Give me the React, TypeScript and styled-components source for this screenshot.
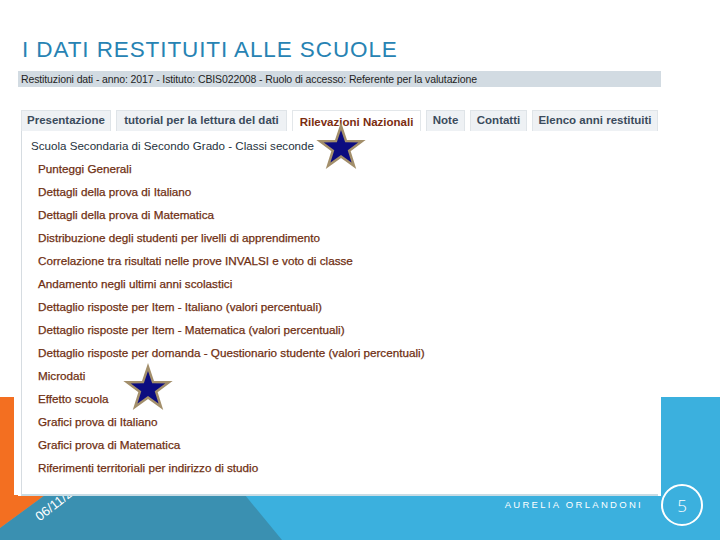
import styled, { createGlobalStyle } from "styled-components";

const GlobalStyle = createGlobalStyle`
  html, body {
    margin: 0;
    padding: 0;
    background: #ffffff;
  }
  body {
    font-family: "Liberation Sans", Arial, sans-serif;
  }
`;

const Slide = styled.div`
  position: relative;
  width: 720px;
  height: 540px;
  overflow: hidden;
  background: #ffffff;
  display: flex;
  flex-direction: column;
`;

const Backdrop = styled.svg`
  position: absolute;
  left: 0;
  top: 0;
  z-index: 0;
`;

const Title = styled.h1`
  position: relative;
  z-index: 1;
  margin: 37px 0 0 22px;
  font: 400 22.5px/26px "Liberation Sans", Arial, sans-serif;
  letter-spacing: 0.9px;
  color: #2783b3;
`;

const DateLabel = styled.div`
  position: absolute;
  left: 41px;
  top: 510px;
  z-index: 1;
  font: 400 13px/13px "Liberation Sans", Arial, sans-serif;
  color: #ffffff;
  transform: rotate(-38deg);
  transform-origin: left bottom;
  white-space: nowrap;
`;

const Shot = styled.div`
  position: relative;
  z-index: 2;
  margin: 8px 0 0 18px;
  width: 643px;
  height: 425px;
  background: #ffffff;
  display: flex;
  flex-direction: column;
`;

const HeaderBar = styled.div`
  height: 16px;
  padding-left: 3px;
  background: #d2dbe2;
  font: 400 10.5px/16px "Liberation Sans", Arial, sans-serif;
  letter-spacing: -0.12px;
  color: #1e1e1e;
  white-space: nowrap;
  overflow: hidden;
`;

const Body = styled.div`
  flex: 1;
  display: flex;
  flex-direction: column;
  padding: 23px 3px 0 3px;
`;

const TabRow = styled.div`
  display: flex;
  gap: 5px;
  height: 21px;
`;

const Tab = styled.div<{ $width: number; $active?: boolean }>`
  box-sizing: border-box;
  width: ${(p) => p.$width}px;
  height: 21px;
  border: 1px solid ${(p) => (p.$active ? "#e3e7ea" : "#dfe4e8")};
  border-bottom: none;
  background: ${(p) => (p.$active ? "#ffffff" : "#eef1f4")};
  padding-top: ${(p) => (p.$active ? "2px" : "0")};
  font: 700 11.5px/19px "Liberation Sans", Arial, sans-serif;
  color: ${(p) => (p.$active ? "#7b2d10" : "#3b4b5c")};
  text-align: center;
  white-space: nowrap;
`;

const TabPanel = styled.div`
  flex: 1;
  border-left: 1px solid #d6dce1;
  border-bottom: 2px solid #c8dce5;
  padding: 3px 0 0 9px;
`;

const SubTitle = styled.div`
  font: 400 11.6px/23px "Liberation Sans", Arial, sans-serif;
  color: #26323d;
`;

const LinkList = styled.ul`
  margin: 0;
  padding: 0 0 0 7px;
  list-style: none;
`;

const LinkItem = styled.li`
  font: 400 11.7px/23px "Liberation Sans", Arial, sans-serif;
  color: #6f2f12;
  -webkit-text-stroke: 0.25px #6f2f12;
  white-space: nowrap;
`;

const StarMark = styled.svg<{ $left: number; $top: number }>`
  position: absolute;
  left: ${(p) => p.$left}px;
  top: ${(p) => p.$top}px;
`;

const Footer = styled.div`
  position: relative;
  z-index: 3;
  display: flex;
  justify-content: flex-end;
  align-items: center;
  gap: 18px;
  height: 42px;
  margin-top: -12px;
  padding-right: 17px;
`;

const Author = styled.div`
  font: 400 9.5px/12px "Liberation Sans", Arial, sans-serif;
  letter-spacing: 2.3px;
  color: #ffffff;
`;

const PageNum = styled.div`
  box-sizing: border-box;
  width: 42px;
  height: 42px;
  border: 2.5px solid #ffffff;
  border-radius: 50%;
  display: flex;
  align-items: center;
  justify-content: center;
  font: 300 17px/1 "Open Sans", "Liberation Sans", sans-serif;
  color: #ffffff;
`;

const tabs = [
  { label: "Presentazione", width: 90 },
  { label: "tutorial per la lettura del dati", width: 171 },
  { label: "Rilevazioni Nazionali", width: 129, active: true },
  { label: "Note", width: 39 },
  { label: "Contatti", width: 57 },
  { label: "Elenco anni restituiti", width: 126 },
];

const links = [
  "Punteggi Generali",
  "Dettagli della prova di Italiano",
  "Dettagli della prova di Matematica",
  "Distribuzione degli studenti per livelli di apprendimento",
  "Correlazione tra risultati nelle prove INVALSI e voto di classe",
  "Andamento negli ultimi anni scolastici",
  "Dettaglio risposte per Item - Italiano (valori percentuali)",
  "Dettaglio risposte per Item - Matematica (valori percentuali)",
  "Dettaglio risposte per domanda - Questionario studente (valori percentuali)",
  "Microdati",
  "Effetto scuola",
  "Grafici prova di Italiano",
  "Grafici prova di Matematica",
  "Riferimenti territoriali per indirizzo di studio",
];

const starPoints = (c: number, outer: number, inner: number) =>
  Array.from({ length: 10 }, (_, i) => {
    const r = i % 2 === 0 ? outer : inner;
    const a = ((-90 + i * 36) * Math.PI) / 180;
    return `${(c + r * Math.cos(a)).toFixed(2)},${(c + r * Math.sin(a)).toFixed(2)}`;
  }).join(" ");

const Star = ({ left, top }: { left: number; top: number }) => (
  <StarMark $left={left} $top={top} width="56" height="56" viewBox="0 0 56 56">
    <polygon
      points={starPoints(28, 22, 8.6)}
      fill="#0c0c80"
      stroke="#a38f6b"
      strokeWidth="2.5"
    />
  </StarMark>
);

const App = () => (
  <Slide>
    <GlobalStyle />
    <Backdrop width="720" height="540" viewBox="0 0 720 540">
      <rect x="0" y="495" width="720" height="45" fill="#3bb0de" />
      <rect x="661" y="397" width="59" height="143" fill="#3bb0de" />
      <polygon points="0,528 45,495 245,495 282,540 0,540" fill="#3a90b1" />
      <polygon points="0,397 14,397 14,495 45,495 0,528" fill="#f36f21" />
    </Backdrop>
    <DateLabel>06/11/2017</DateLabel>
    <Title>I DATI RESTITUITI ALLE SCUOLE</Title>
    <Shot>
      <HeaderBar>
        Restituzioni dati - anno: 2017 - Istituto: CBIS022008 - Ruolo di accesso: Referente per la valutazione
      </HeaderBar>
      <Body>
        <TabRow>
          {tabs.map((t) => (
            <Tab key={t.label} $width={t.width} $active={t.active}>
              {t.label}
            </Tab>
          ))}
        </TabRow>
        <TabPanel>
          <SubTitle>Scuola Secondaria di Secondo Grado - Classi seconde</SubTitle>
          <LinkList>
            {links.map((l) => (
              <LinkItem key={l}>{l}</LinkItem>
            ))}
          </LinkList>
        </TabPanel>
      </Body>
      <Star left={295} top={49} />
      <Star left={102} top={290} />
    </Shot>
    <Footer>
      <Author>AURELIA ORLANDONI</Author>
      <PageNum>5</PageNum>
    </Footer>
  </Slide>
);

export default App;
